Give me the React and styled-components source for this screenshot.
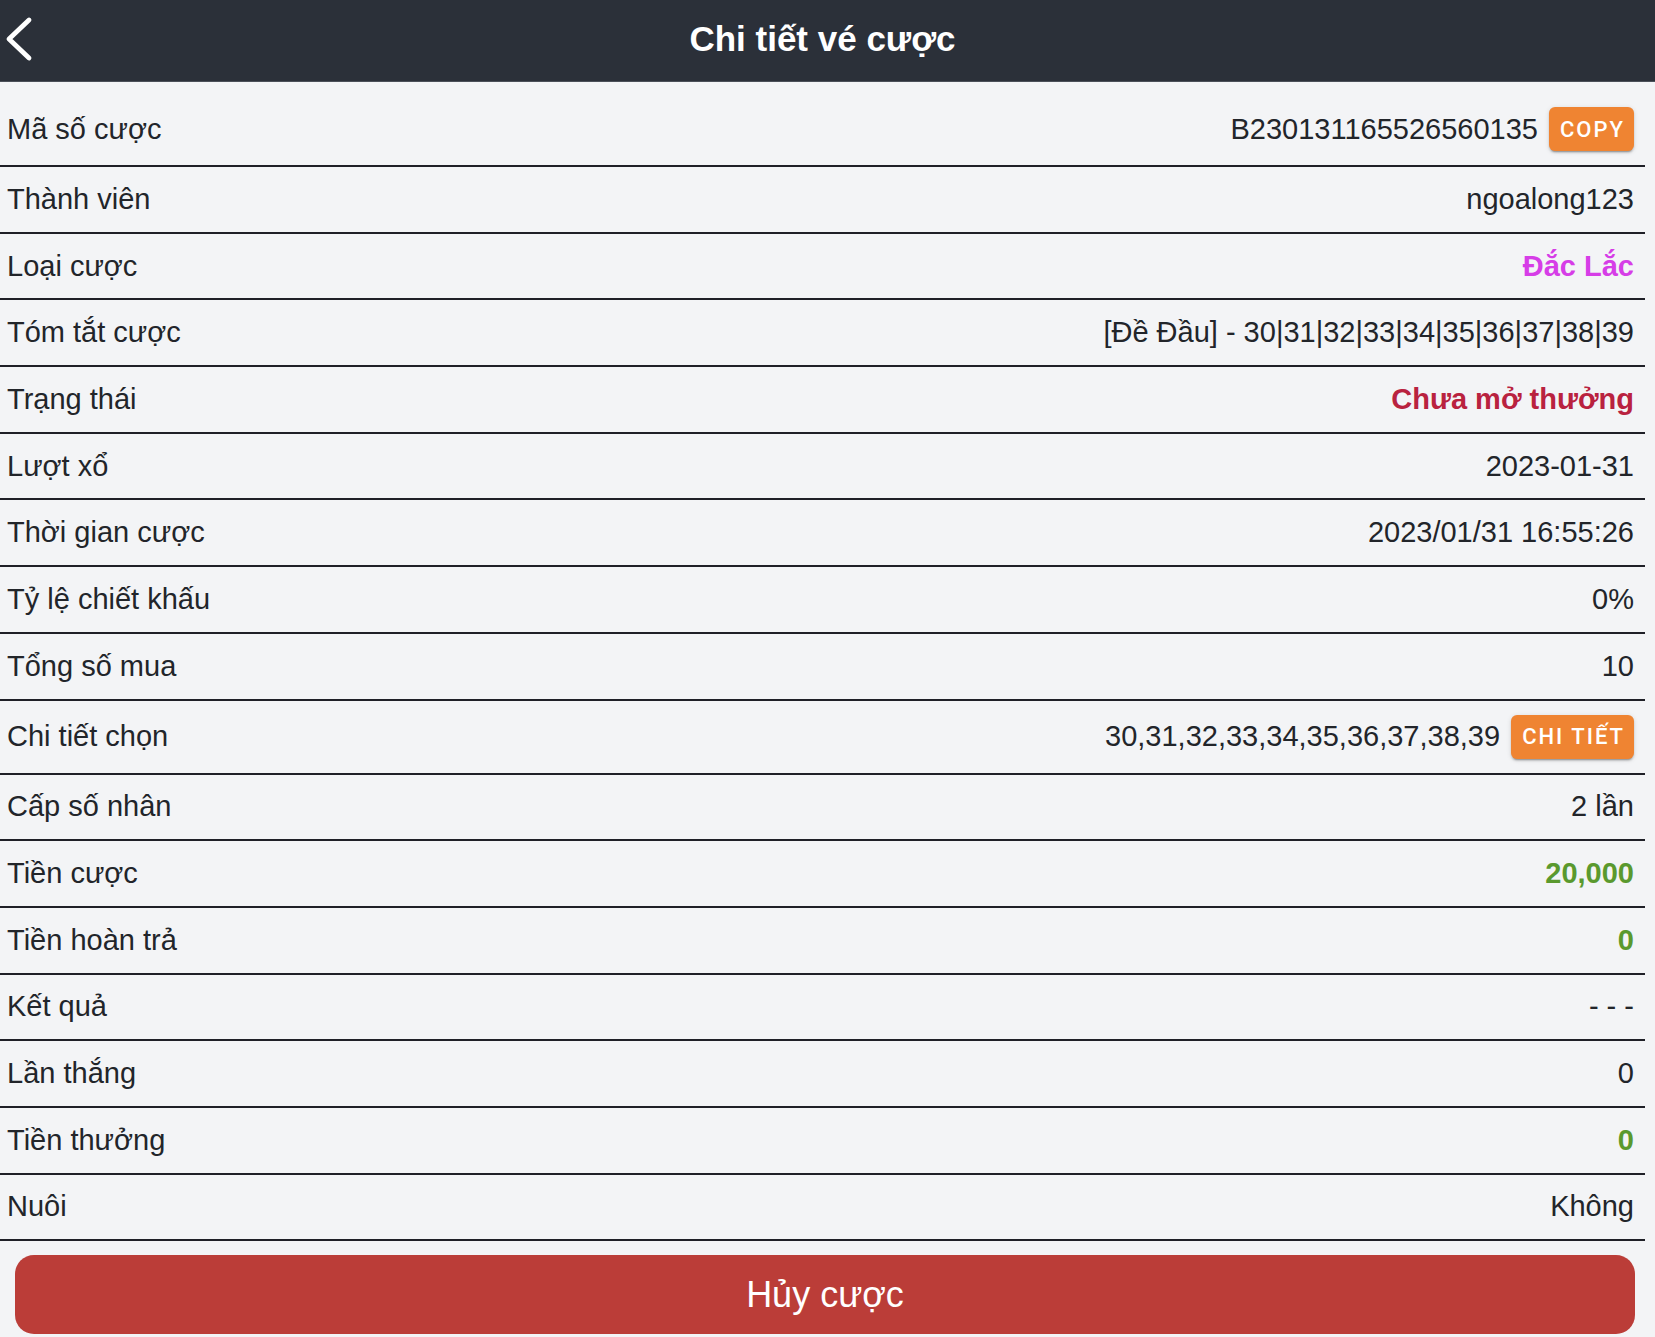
import React from "react";
import styled, { createGlobalStyle, css } from "styled-components";

const GlobalStyle = createGlobalStyle`
  html, body {
    margin: 0;
    padding: 0;
    background: #f3f4f6;
  }
  body {
    font-family: "Liberation Sans", Arial, "Noto Sans", sans-serif;
    color: #22252a;
  }
  * { box-sizing: border-box; }
`;

const Page = styled.div`
  min-height: 100vh;
  background: #f3f4f6;
`;

const Header = styled.header`
  display: grid;
  grid-template-columns: 1fr auto 1fr;
  align-items: center;
  height: 82px;
  padding: 0 10px 4px 0;
  background: #2b3039;
  border-bottom: 1px solid #4b5059;
`;

const BackButton = styled.button`
  justify-self: start;
  display: flex;
  align-items: center;
  padding: 0 0 0 5px;
  border: 0;
  background: transparent;
  cursor: pointer;
`;

const Title = styled.h1`
  margin: 0;
  font-size: 35px;
  font-weight: 700;
  color: #ffffff;
  white-space: nowrap;
`;

const List = styled.section`
  width: 1645px;
  padding-top: 11px;
`;

const Row = styled.div`
  display: flex;
  align-items: center;
  justify-content: space-between;
  min-height: 66.7px;
  padding: ${(p) => (p.$hasAction ? "14px" : "0")} 11px
    ${(p) => (p.$hasAction ? "14px" : "0")} 7px;
  border-bottom: 2px solid #1f2027;
`;

const Label = styled.span`
  font-size: 29px;
  color: #22252a;
  white-space: nowrap;
`;

const toneColors = {
  magenta: "#d63de7",
  crimson: "#b9223f",
  green: "#5a992e",
};

const Value = styled.span`
  font-size: 29px;
  color: #22252a;
  white-space: nowrap;
  ${(p) =>
    p.$tone &&
    css`
      color: ${toneColors[p.$tone]};
      font-weight: 700;
    `}
`;

const ValueGroup = styled.div`
  display: flex;
  align-items: center;
  gap: 11px;
`;

const ActionButton = styled.button`
  height: 44px;
  padding: 0 9px 0 11px;
  border: 0;
  border-radius: 6px;
  background: #ef8432;
  color: #ffffff;
  font-family: Roboto, "Liberation Sans", sans-serif;
  font-size: 22px;
  font-weight: 500;
  letter-spacing: 2px;
  text-transform: uppercase;
  box-shadow: 0 3px 1px -2px rgba(0, 0, 0, 0.2), 0 2px 2px 0 rgba(0, 0, 0, 0.14),
    0 1px 5px 0 rgba(0, 0, 0, 0.12);
  cursor: pointer;
`;

const Footer = styled.div`
  width: 1655px;
  padding: 14px 20px 0 15px;
`;

const CancelButton = styled.button`
  display: block;
  width: 100%;
  height: 79px;
  border: 0;
  border-radius: 19px;
  background: #bb3d38;
  color: #ffffff;
  font-family: "Liberation Sans", Arial, sans-serif;
  font-size: 36px;
  cursor: pointer;
`;

const rows = [
  { label: "Mã số cược", value: "B230131165526560135", action: "COPY" },
  { label: "Thành viên", value: "ngoalong123" },
  { label: "Loại cược", value: "Đắc Lắc", tone: "magenta" },
  { label: "Tóm tắt cược", value: "[Đề Đầu] - 30|31|32|33|34|35|36|37|38|39" },
  { label: "Trạng thái", value: "Chưa mở thưởng", tone: "crimson" },
  { label: "Lượt xổ", value: "2023-01-31" },
  { label: "Thời gian cược", value: "2023/01/31 16:55:26" },
  { label: "Tỷ lệ chiết khấu", value: "0%" },
  { label: "Tổng số mua", value: "10" },
  { label: "Chi tiết chọn", value: "30,31,32,33,34,35,36,37,38,39", action: "Chi tiết" },
  { label: "Cấp số nhân", value: "2 lần" },
  { label: "Tiền cược", value: "20,000", tone: "green" },
  { label: "Tiền hoàn trả", value: "0", tone: "green" },
  { label: "Kết quả", value: "- - -" },
  { label: "Lần thắng", value: "0" },
  { label: "Tiền thưởng", value: "0", tone: "green" },
  { label: "Nuôi", value: "Không" },
];

function BackIcon() {
  return (
    <svg width="32" height="46" viewBox="0 0 32 46" fill="none">
      <polyline
        points="24,4 4,23 24,42"
        stroke="#ffffff"
        strokeWidth="4.8"
        strokeLinecap="round"
        strokeLinejoin="round"
      />
    </svg>
  );
}

export default function App() {
  return (
    <Page>
      <GlobalStyle />
      <Header>
        <BackButton aria-label="Quay lại">
          <BackIcon />
        </BackButton>
        <Title>Chi tiết vé cược</Title>
        <span />
      </Header>
      <List>
        {rows.map((r) => (
          <Row key={r.label} $hasAction={!!r.action}>
            <Label>{r.label}</Label>
            <ValueGroup>
              <Value $tone={r.tone}>{r.value}</Value>
              {r.action && <ActionButton>{r.action}</ActionButton>}
            </ValueGroup>
          </Row>
        ))}
      </List>
      <Footer>
        <CancelButton>Hủy cược</CancelButton>
      </Footer>
    </Page>
  );
}
